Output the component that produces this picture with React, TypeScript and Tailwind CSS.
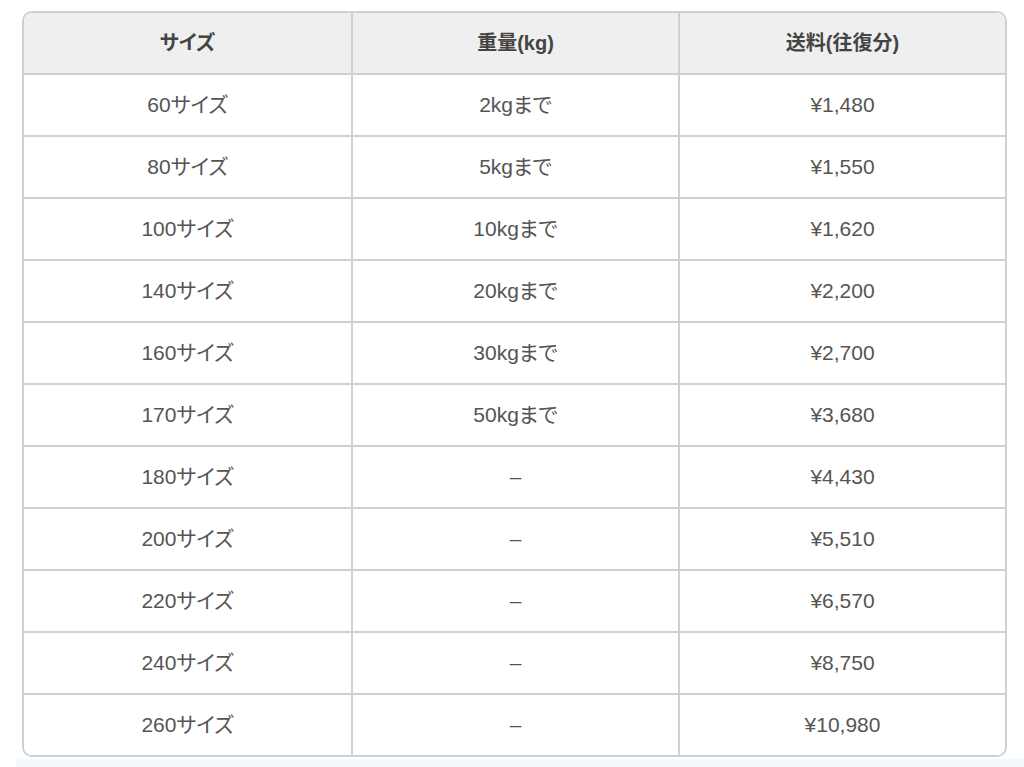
const ROWS: [string, string, string][] = [
  ['60サイズ', '2kgまで', '¥1,480'],
  ['80サイズ', '5kgまで', '¥1,550'],
  ['100サイズ', '10kgまで', '¥1,620'],
  ['140サイズ', '20kgまで', '¥2,200'],
  ['160サイズ', '30kgまで', '¥2,700'],
  ['170サイズ', '50kgまで', '¥3,680'],
  ['180サイズ', '–', '¥4,430'],
  ['200サイズ', '–', '¥5,510'],
  ['220サイズ', '–', '¥6,570'],
  ['240サイズ', '–', '¥8,750'],
  ['260サイズ', '–', '¥10,980'],
];

const HEAD = ['サイズ', '重量(kg)', '送料(往復分)'];

export default function App() {
  return (
    <div className="min-h-[767px] bg-white pt-[11px] font-['Liberation_Sans','Noto_Sans_CJK_JP',sans-serif] [font-feature-settings:'palt']">
      <div className="ml-[22px] w-[985px] overflow-hidden rounded-[10px] border-2 border-[#d0d0d0]">
        <div className="grid grid-cols-3 bg-[#efefef]">
          {HEAD.map((h, i) => (
            <div
              key={h}
              className={`flex h-[62px] items-center justify-center border-b-2 border-[#d0d0d0] text-[20px] font-bold text-[#444] ${
                i > 0 ? 'border-l-2' : ''
              }`}
            >
              {h}
            </div>
          ))}
        </div>
        {ROWS.map((row, r) => (
          <div key={row[0]} className="grid grid-cols-3 bg-white">
            {row.map((c, i) => (
              <div
                key={i}
                className={`flex items-center justify-center text-[21px] text-[#555] ${
                  r < ROWS.length - 1 ? 'h-[62px] border-b-2 border-[#d0d0d0]' : 'h-[60px]'
                } ${i > 0 ? 'border-l-2 border-l-[#d0d0d0]' : ''}`}
              >
                {c}
              </div>
            ))}
          </div>
        ))}
      </div>
      <div className="ml-[16px] mt-[2px] h-[10px] bg-[#f6f9fc]" />
    </div>
  );
}
